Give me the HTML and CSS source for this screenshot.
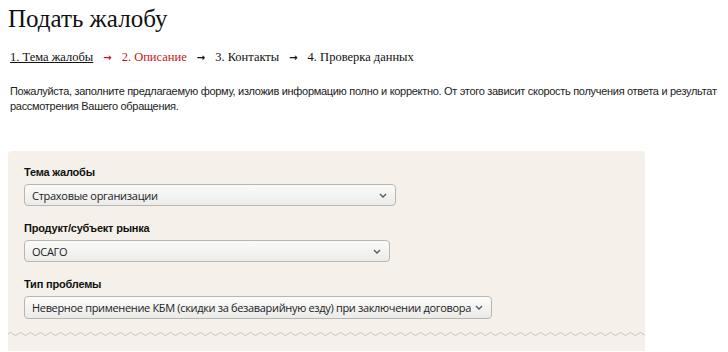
FILE: index.html
```html
<!DOCTYPE html>
<html lang="ru">
<head>
    <meta charset="UTF-8">
    <meta name="viewport" content="width=device-width, initial-scale=1.0">
    <title>Подать жалобу</title>
    <link rel="stylesheet" href="styles.css">
</head>
<body>
    <h1 class="page-title">Подать жалобу</h1>

    <div class="steps">
        <span class="step done">1. Тема жалобы</span>
        <span class="arrow current">&rarr;</span>
        <span class="step current">2. Описание</span>
        <span class="arrow">&rarr;</span>
        <span class="step">3. Контакты</span>
        <span class="arrow">&rarr;</span>
        <span class="step">4. Проверка данных</span>
    </div>

    <p class="intro">Пожалуйста, заполните предлагаемую форму, изложив информацию полно и корректно. От этого зависит скорость получения ответа и результат рассмотрения Вашего обращения.</p>

    <div class="form-box">
        <div class="field">
            <label>Тема жалобы</label>
            <div class="select select-theme">
                <span>Страховые организации</span>
                <svg width="8" height="5" viewBox="0 0 8 5"><path d="M1 1l3 3 3-3" fill="none" stroke="#555" stroke-width="1.3"/></svg>
            </div>
        </div>
        <div class="field">
            <label>Продукт/субъект рынка</label>
            <div class="select select-product">
                <span>ОСАГО</span>
                <svg width="8" height="5" viewBox="0 0 8 5"><path d="M1 1l3 3 3-3" fill="none" stroke="#555" stroke-width="1.3"/></svg>
            </div>
        </div>
        <div class="field">
            <label>Тип проблемы</label>
            <div class="select select-type">
                <span>Неверное применение КБМ (скидки за безаварийную езду) при заключении договора</span>
                <svg width="8" height="5" viewBox="0 0 8 5"><path d="M1 1l3 3 3-3" fill="none" stroke="#555" stroke-width="1.3"/></svg>
            </div>
        </div>
        <div class="wave">
            <svg width="637" height="6" viewBox="0 0 637 6" preserveAspectRatio="none">
                <path d="M0 3 q2.5 -3 5 0 t5 0 t5 0 t5 0 t5 0 t5 0 t5 0 t5 0 t5 0 t5 0 t5 0 t5 0 t5 0 t5 0 t5 0 t5 0 t5 0 t5 0 t5 0 t5 0 t5 0 t5 0 t5 0 t5 0 t5 0 t5 0 t5 0 t5 0 t5 0 t5 0 t5 0 t5 0 t5 0 t5 0 t5 0 t5 0 t5 0 t5 0 t5 0 t5 0 t5 0 t5 0 t5 0 t5 0 t5 0 t5 0 t5 0 t5 0 t5 0 t5 0 t5 0 t5 0 t5 0 t5 0 t5 0 t5 0 t5 0 t5 0 t5 0 t5 0 t5 0 t5 0 t5 0 t5 0 t5 0 t5 0 t5 0 t5 0 t5 0 t5 0 t5 0 t5 0 t5 0 t5 0 t5 0 t5 0 t5 0 t5 0 t5 0 t5 0 t5 0 t5 0 t5 0 t5 0 t5 0 t5 0 t5 0 t5 0 t5 0 t5 0 t5 0 t5 0 t5 0 t5 0 t5 0 t5 0 t5 0 t5 0 t5 0 t5 0 t5 0 t5 0 t5 0 t5 0 t5 0 t5 0 t5 0 t5 0 t5 0 t5 0 t5 0 t5 0 t5 0 t5 0 t5 0 t5 0 t5 0 t5 0 t5 0 t5 0 t5 0 t5 0 t5 0 t5 0 t5 0 t5 0 t5 0 t5 0 t5 0 t5 0 t5 0 t5 0 t5 0 t5 0 t5 0 t5 0 t5 0 t5 0 t5 0 t5 0" fill="none" stroke="#c9c4bd" stroke-width="1"/>
            </svg>
        </div>
    </div>
</body>
</html>
```

FILE: styles.css
```css
body {
    margin: 0;
    padding: 0 8px;
    background-color: #fff;
    color: #111;
    font-family: "Liberation Sans", Arial, sans-serif;
}

.page-title {
    margin: 0;
    padding-top: 4px;
    font-family: "Liberation Serif", "Times New Roman", serif;
    font-weight: normal;
    font-size: 25px;
    line-height: 30px;
    color: #111;
}

.steps {
    margin-top: 15px;
    font-family: "Liberation Serif", "Times New Roman", serif;
    font-size: 12.5px;
    line-height: 16px;
    display: flex;
    align-items: baseline;
    gap: 10px;
    padding-left: 2px;
}

.step.done {
    text-decoration: underline;
}

.arrow {
    font-family: "DejaVu Sans", sans-serif;
    font-weight: bold;
    font-size: 10px;
}

.current {
    color: #c4161c;
}

.intro {
    margin: 18px 0 0 2px;
    font-size: 11px;
    line-height: 15px;
    letter-spacing: -0.3px;
    color: #222;
}

.form-box {
    margin-top: 37px;
    background-color: #f5f1ea;
    border-radius: 4px 4px 0 0;
    width: 637px;
    padding-top: 14px;
    height: 200px;
    box-sizing: border-box;
}

.field {
    padding-left: 16px;
    margin-bottom: 15px;
}

.field label {
    display: block;
    font-weight: bold;
    font-size: 11px;
    line-height: 14px;
    letter-spacing: -0.2px;
    margin-bottom: 5px;
    color: #111;
}

.select {
    display: flex;
    align-items: center;
    justify-content: space-between;
    box-sizing: border-box;
    height: 22px;
    padding: 0 8px 0 7px;
    border: 1px solid #b9b6b1;
    border-radius: 4px;
    background: linear-gradient(#fbfbfa, #ebebea);
    font-family: "Open Sans", "Noto Sans", sans-serif;
    font-size: 11px;
    letter-spacing: -0.28px;
    color: #222;
    white-space: nowrap;
}

.select svg {
    flex-shrink: 0;
}

.select-theme {
    width: 372px;
}

.select-product {
    width: 366px;
}

.select-type {
    width: 468px;
    height: 23px;
    letter-spacing: -0.33px;
}

.select-type span {
    margin-right: 4px;
}

.wave {
    margin-top: -3px;
    line-height: 0;
}
```
